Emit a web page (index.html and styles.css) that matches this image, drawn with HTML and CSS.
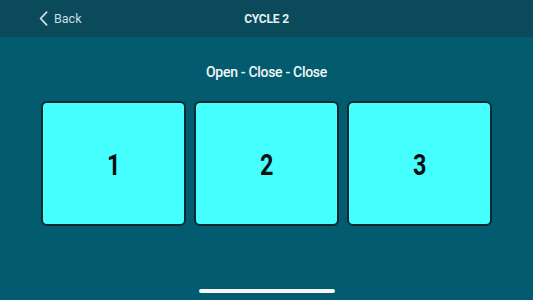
FILE: index.html
```html
<!DOCTYPE html>
<html>
<head>
<meta charset="utf-8">
<link rel="stylesheet" href="styles.css">
</head>
<body>
<div class="screen">
  <header class="nav">
    <div class="back">
      <svg class="chev" width="9" height="15" viewBox="0 0 9 15"><path d="M7.6 1.2 L1.6 7.5 L7.6 13.8" fill="none" stroke="#d3e4e8" stroke-width="1.7" stroke-linecap="round" stroke-linejoin="round"/></svg>
      <span>Back</span>
    </div>
    <div class="title">CYCLE 2</div>
  </header>
  <main class="content">
    <div class="subtitle">Open - Close - Close</div>
    <div class="cards">
      <div class="card"><span class="num">1</span></div>
      <div class="card"><span class="num">2</span></div>
      <div class="card"><span class="num">3</span></div>
    </div>
  </main>
  <div class="home-bar"></div>
</div>
</body>
</html>
```
FILE: styles.css
```css
html, body {
  margin: 0;
  padding: 0;
  width: 533px;
  height: 300px;
  overflow: hidden;
  background: #025b6f;
  font-family: Roboto, "Liberation Sans", sans-serif;
}
.screen {
  width: 533px;
  height: 300px;
  display: flex;
  flex-direction: column;
}
.nav {
  height: 37px;
  background: #0a4a5b;
  position: relative;
  display: flex;
  align-items: center;
  justify-content: center;
  flex-shrink: 0;
}
.back {
  position: absolute;
  left: 39px;
  top: 0;
  height: 37px;
  display: flex;
  align-items: center;
  gap: 6px;
  color: #c9dce1;
  font-size: 12.5px;
}
.chev {
  display: block;
  margin-top: -1px;
}
.title {
  color: #e6f1f3;
  font-size: 12px;
  font-weight: 700;
  letter-spacing: -0.2px;
}
.content {
  flex: 1;
  display: flex;
  flex-direction: column;
  align-items: center;
}
.subtitle {
  margin-top: 26px;
  height: 18px;
  line-height: 18px;
  color: #f2f7f8;
  font-size: 14px;
  font-weight: 500;
  letter-spacing: -0.3px;
}
.cards {
  margin-top: 20px;
  display: flex;
  gap: 8px;
}
.card {
  width: 145px;
  height: 125px;
  box-sizing: border-box;
  background: #45ffff;
  border: 2px solid #0a2a32;
  border-radius: 6px;
  display: flex;
  align-items: center;
  justify-content: center;
}
.num {
  display: inline-block;
  font-size: 30px;
  font-weight: 700;
  color: #0a0f10;
  transform: scaleX(0.78);
  margin-top: 1px;
}
.home-bar {
  position: absolute;
  left: 199px;
  top: 289px;
  width: 136px;
  height: 4px;
  border-radius: 2px;
  background: #f4f8f9;
}
```
